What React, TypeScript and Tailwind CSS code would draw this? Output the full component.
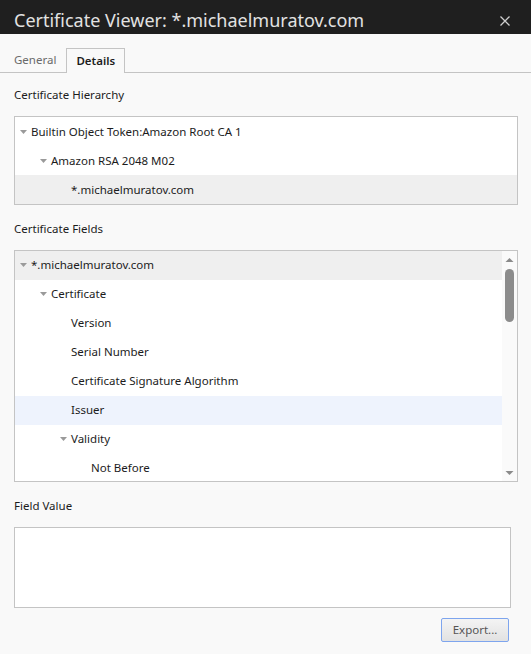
import React from "react"

type Row = { label: string; depth: number; open?: boolean; tone?: "sel" | "hover" }

const hierarchy: Row[] = [
  { label: "Builtin Object Token:Amazon Root CA 1", depth: 0, open: true },
  { label: "Amazon RSA 2048 M02", depth: 1, open: true },
  { label: "*.michaelmuratov.com", depth: 2, tone: "sel" },
]

const fields: Row[] = [
  { label: "*.michaelmuratov.com", depth: 0, open: true, tone: "sel" },
  { label: "Certificate", depth: 1, open: true },
  { label: "Version", depth: 2 },
  { label: "Serial Number", depth: 2 },
  { label: "Certificate Signature Algorithm", depth: 2 },
  { label: "Issuer", depth: 2, tone: "hover" },
  { label: "Validity", depth: 2, open: true },
  { label: "Not Before", depth: 3 },
]

const pad = ["pl-[2px]", "pl-[22px]", "pl-[42px]", "pl-[62px]"]

function Twisty({ open }: { open?: boolean }) {
  if (!open) return <span className="w-[13px] shrink-0" />
  return (
    <svg width="13" height="8" viewBox="0 0 13 8" className="shrink-0">
      <path d="M3 2h7l-3.5 4z" fill="#9a9a9a" />
    </svg>
  )
}

function TreeRow({ row }: { row: Row }) {
  const bg = row.tone === "sel" ? "bg-[#efefef]" : row.tone === "hover" ? "bg-[#eef3fd]" : ""
  return (
    <div className={`flex h-[29px] items-center gap-[1px] text-[11.5px] text-[#1c1c1c] ${pad[row.depth]} ${bg}`}>
      <Twisty open={row.open} />
      <span>{row.label}</span>
    </div>
  )
}

export default function App() {
  return (
    <div className="flex h-[654px] w-[531px] flex-col bg-[#f9f9f9] font-['Noto_Sans',sans-serif]">
      <div className="flex h-[34px] items-center justify-between bg-[#1f1f1f] pl-[14px] pr-[20px]">
        <span className="mt-[6px] text-[18px] text-[#e2e2e2]">Certificate Viewer: *.michaelmuratov.com</span>
        <svg width="12" height="12" viewBox="0 0 12 12" className="mt-[8px]">
          <path d="M1.5 1.5l9 9M10.5 1.5l-9 9" stroke="#cfcfcf" strokeWidth="1.3" />
        </svg>
      </div>

      <div className="mt-[14px] flex h-[25px] border-b border-[#c4c4c4] text-[11.5px]">
        <div className="flex items-end pb-[4px] pl-[14px] pr-[10px] text-[#6a6a6a]">General</div>
        <div className="-mb-[1px] flex items-end border border-b-0 border-[#c4c4c4] bg-[#f9f9f9] px-[9px] pb-[4px] font-semibold text-[#1c1c1c]">
          Details
        </div>
      </div>

      <div className="px-[14px]">
        <div className="mt-[13px] text-[11.5px] text-[#1c1c1c]">Certificate Hierarchy</div>
        <div className="mt-[13px] w-[504px] border border-[#c4c4c4] bg-white">
          {hierarchy.map((r, i) => (
            <TreeRow key={i} row={r} />
          ))}
        </div>

        <div className="mt-[15px] text-[11.5px] text-[#1c1c1c]">Certificate Fields</div>
        <div className="mt-[12px] flex h-[232px] w-[504px] border border-[#c4c4c4] bg-white">
          <div className="flex-1 overflow-hidden">
            {fields.map((r, i) => (
              <TreeRow key={i} row={r} />
            ))}
          </div>
          <div className="flex w-[15px] flex-col items-center bg-[#fafafa]">
            <svg width="9" height="6" viewBox="0 0 9 6" className="mt-[6px]">
              <path d="M0.5 5h8L4.5 1z" fill="#8a8a8a" />
            </svg>
            <div className="mt-[6px] h-[53px] w-[9px] rounded-full bg-[#8c8c8c]" />
            <div className="flex-1" />
            <svg width="9" height="6" viewBox="0 0 9 6" className="mb-[5px]">
              <path d="M0.5 1h8L4.5 5z" fill="#8a8a8a" />
            </svg>
          </div>
        </div>

        <div className="mt-[15px] text-[11.5px] text-[#1c1c1c]">Field Value</div>
        <div className="mt-[13px] h-[81px] w-[497px] border border-[#c4c4c4] bg-white" />

        <div className="mt-[10px] flex w-[495px] justify-end">
          <button className="h-[24px] w-[68px] rounded-[2px] border border-[#7ea5ee] bg-gradient-to-b from-[#f4f4f4] to-[#e2e2e2] text-[11.5px] text-[#555]">
            Export...
          </button>
        </div>
      </div>
    </div>
  )
}
